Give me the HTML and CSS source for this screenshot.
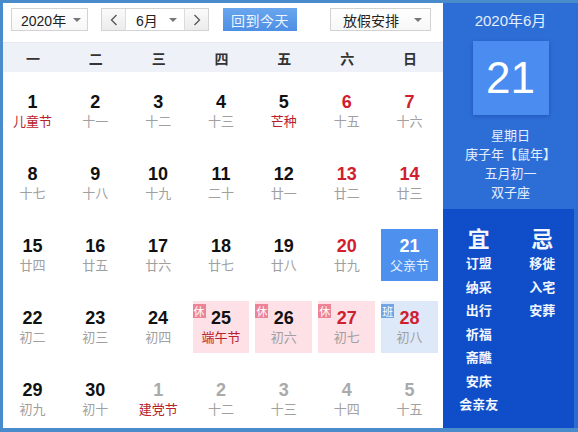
FILE: index.html
```html
<!DOCTYPE html>
<html lang="zh-CN">
<head>
<meta charset="utf-8">
<title>万年历</title>
<link rel="stylesheet" href="styles.css">
</head>
<body>
<div class="frame">
  <div class="cal">
    <div class="toolbar">
      <div class="select year"><span>2020年</span><i class="tri"></i></div>
      <div class="month-group">
        <div class="nav"><svg width="8" height="12" viewBox="0 0 8 12"><polyline points="6.5,1 1.5,6 6.5,11" fill="none" stroke="#555" stroke-width="1.3"/></svg></div>
        <div class="month"><span>6月</span><i class="tri"></i></div>
        <div class="nav"><svg width="8" height="12" viewBox="0 0 8 12"><polyline points="1.5,1 6.5,6 1.5,11" fill="none" stroke="#555" stroke-width="1.3"/></svg></div>
      </div>
      <div class="today-btn">回到今天</div>
      <div class="select holiday"><span>放假安排</span><i class="tri"></i></div>
    </div>
    <div class="weekdays">
      <span>一</span><span>二</span><span>三</span><span>四</span><span>五</span><span>六</span><span>日</span>
    </div>
    <div class="grid">
      <div class="cell"><b>1</b><em class="fest">儿童节</em></div>
      <div class="cell"><b>2</b><em>十一</em></div>
      <div class="cell"><b>3</b><em>十二</em></div>
      <div class="cell"><b>4</b><em>十三</em></div>
      <div class="cell"><b>5</b><em class="fest">芒种</em></div>
      <div class="cell wk"><b>6</b><em>十五</em></div>
      <div class="cell wk"><b>7</b><em>十六</em></div>

      <div class="cell"><b>8</b><em>十七</em></div>
      <div class="cell"><b>9</b><em>十八</em></div>
      <div class="cell"><b>10</b><em>十九</em></div>
      <div class="cell"><b>11</b><em>二十</em></div>
      <div class="cell"><b>12</b><em>廿一</em></div>
      <div class="cell wk"><b>13</b><em>廿二</em></div>
      <div class="cell wk"><b>14</b><em>廿三</em></div>

      <div class="cell"><b>15</b><em>廿四</em></div>
      <div class="cell"><b>16</b><em>廿五</em></div>
      <div class="cell"><b>17</b><em>廿六</em></div>
      <div class="cell"><b>18</b><em>廿七</em></div>
      <div class="cell"><b>19</b><em>廿八</em></div>
      <div class="cell wk"><b>20</b><em>廿九</em></div>
      <div class="cell today"><b>21</b><em>父亲节</em></div>

      <div class="cell"><b>22</b><em>初二</em></div>
      <div class="cell"><b>23</b><em>初三</em></div>
      <div class="cell"><b>24</b><em>初四</em></div>
      <div class="cell rest"><i class="badge">休</i><b>25</b><em class="fest">端午节</em></div>
      <div class="cell rest"><i class="badge">休</i><b>26</b><em>初六</em></div>
      <div class="cell rest wk"><i class="badge">休</i><b>27</b><em>初七</em></div>
      <div class="cell work wk"><i class="badge">班</i><b>28</b><em>初八</em></div>

      <div class="cell"><b>29</b><em>初九</em></div>
      <div class="cell"><b>30</b><em>初十</em></div>
      <div class="cell other"><b>1</b><em class="fest">建党节</em></div>
      <div class="cell other"><b>2</b><em>十二</em></div>
      <div class="cell other"><b>3</b><em>十三</em></div>
      <div class="cell other"><b>4</b><em>十四</em></div>
      <div class="cell other"><b>5</b><em>十五</em></div>
    </div>
  </div>
  <div class="side">
    <div class="side-top">
      <div class="ym">2020年6月</div>
      <div class="bigday">21</div>
      <div class="info">
        <div>星期日</div>
        <div>庚子年【鼠年】</div>
        <div>五月初一</div>
        <div>双子座</div>
      </div>
    </div>
    <div class="side-bottom">
      <div class="col">
        <div class="head">宜</div>
        <div>订盟</div><div>纳采</div><div>出行</div><div>祈福</div><div>斋醮</div><div>安床</div><div>会亲友</div>
      </div>
      <div class="col">
        <div class="head">忌</div>
        <div>移徙</div><div>入宅</div><div>安葬</div>
      </div>
    </div>
  </div>
</div>
</body>
</html>
```

FILE: styles.css
```css
html, body {
  margin: 0;
  padding: 0;
}
body {
  width: 578px;
  height: 432px;
  overflow: hidden;
  font-family: "Liberation Sans", Arial, "Noto Sans CJK SC", sans-serif;
}
.frame {
  display: flex;
  width: 578px;
  height: 432px;
  box-sizing: border-box;
  padding: 3px 0 4px 3px;
  background: #4a8bcb;
}
.cal {
  width: 440px;
  background: #fff;
  display: flex;
  flex-direction: column;
}
.toolbar {
  height: 40px;
  box-sizing: border-box;
  padding: 5px 0 0 8px;
  display: flex;
  align-items: flex-start;
  border-bottom: 1px solid #e4e8ee;
}
.select, .month-group, .today-btn {
  height: 23px;
  box-sizing: border-box;
  font-size: 14px;
  color: #222;
}
.select {
  display: flex;
  align-items: center;
  justify-content: space-between;
  border: 1px solid #d3d3d3;
  background: linear-gradient(#fff, #f7f7f7);
  padding: 0 6px 0 9px;
}
.year { width: 77px; }
.holiday { width: 101px; margin-left: 33px; padding-left: 12px; padding-right: 8px; }
.tri {
  width: 0;
  height: 0;
  border-left: 4px solid transparent;
  border-right: 4px solid transparent;
  border-top: 4px solid #777;
}
.month-group {
  margin-left: 13px;
  width: 108px;
  display: flex;
  border: 1px solid #d3d3d3;
}
.nav {
  width: 23px;
  display: flex;
  align-items: center;
  justify-content: center;
  background: linear-gradient(#fafafa, #ececec);
}
.month {
  flex: 1;
  display: flex;
  align-items: center;
  justify-content: space-between;
  padding: 0 7px 0 10px;
  border-left: 1px solid #dcdcdc;
  border-right: 1px solid #dcdcdc;
  background: #fff;
}
.today-btn {
  margin-left: 14px;
  width: 74px;
  background: linear-gradient(#6aa6ee, #4d8fe4);
  color: #eef5ff;
  display: flex;
  align-items: center;
  justify-content: center;
  letter-spacing: 0.5px;
}
.weekdays {
  height: 29px;
  background: #eef2f8;
  display: grid;
  grid-template-columns: repeat(7, 1fr);
  align-items: center;
  font-family: "Noto Sans CJK SC", sans-serif;
  font-size: 14px;
  font-weight: bold;
  color: #333;
}
.weekdays span {
  text-align: center;
  padding-right: 3px;
}
.grid {
  padding-top: 13px;
  display: grid;
  grid-template-columns: repeat(7, 1fr);
  grid-auto-rows: 52px;
  row-gap: 20px;
}
.cell {
  position: relative;
  margin: 0 5px 0 1px;
  padding-top: 7px;
  box-sizing: border-box;
  text-align: center;
}
.cell b {
  display: block;
  font-family: "Liberation Sans", Arial, sans-serif;
  font-size: 18px;
  line-height: 20px;
  font-weight: bold;
  color: #111;
}
.cell em {
  display: block;
  font-style: normal;
  font-family: "Noto Sans CJK SC", sans-serif;
  font-size: 13px;
  line-height: 18px;
  color: #a0a0a0;
}
.cell em.fest { color: #b8222c; }
.cell.wk b { color: #d0202f; }
.cell.other b { color: #aaa; }
.cell.today { background: #4d90ee; }
.cell.today b { color: #fff; }
.cell.today em { color: #e6f0ff; }
.cell.rest { background: #fde1e7; }
.cell.work { background: #dde8f9; }
.badge {
  position: absolute;
  left: 0;
  top: 3px;
  width: 13px;
  height: 14px;
  font-style: normal;
  font-family: "Noto Sans CJK SC", sans-serif;
  font-size: 11px;
  line-height: 14px;
  color: #fff;
  background: #ee8296;
}
.work .badge { background: #73a4e3; }
.side {
  flex: 1;
  display: flex;
  flex-direction: column;
  font-family: "Noto Sans CJK SC", sans-serif;
}
.side-top {
  height: 206px;
  background: #2d6ed6;
  display: flex;
  flex-direction: column;
  align-items: center;
  padding-top: 7px;
  box-sizing: border-box;
  color: #e4eeff;
}
.ym {
  font-family: "Liberation Sans", Arial, "Noto Sans CJK SC", sans-serif;
  font-size: 15px;
  line-height: 22px;
}
.bigday {
  margin-top: 9px;
  width: 76px;
  height: 74px;
  background: #4a8cf0;
  box-shadow: 0 1px 4px rgba(10, 40, 120, 0.35);
  color: #fff;
  font-family: "Liberation Sans", Arial, sans-serif;
  font-size: 44px;
  display: flex;
  align-items: center;
  justify-content: center;
}
.info {
  margin-top: 10px;
  text-align: center;
  font-size: 13px;
  line-height: 19px;
}
.side-bottom {
  flex: 1;
  background: #0f4ec8;
  border-right: 4px solid #2c6cd2;
  display: flex;
  padding-top: 14px;
  color: #f2f6ff;
}
.col {
  flex: 1;
  display: flex;
  flex-direction: column;
  align-items: center;
  font-size: 13px;
  line-height: 23.5px;
  font-weight: bold;
}
.col:first-child { padding-left: 4px; }
.col .head {
  font-size: 22px;
  line-height: 28px;
  margin-bottom: 0px;
}
```
